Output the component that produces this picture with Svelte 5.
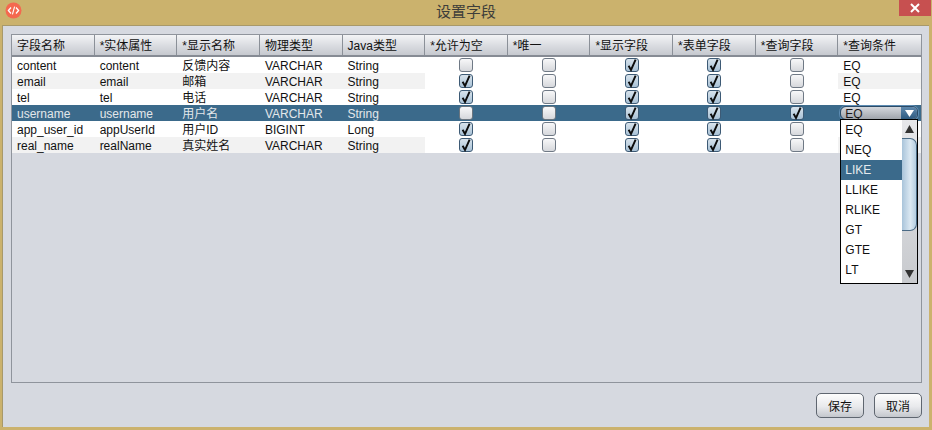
<script lang="ts">
	const headers = ['字段名称', '*实体属性', '*显示名称', '物理类型', 'Java类型', '*允许为空', '*唯一', '*显示字段', '*表单字段', '*查询字段', '*查询条件'];

	// rows under the open popup have no visible condition text
	const rows = [
		{ text: ['content', 'content', '反馈内容', 'VARCHAR', 'String'], checks: [false, false, true, true, false], cond: 'EQ' },
		{ text: ['email', 'email', '邮箱', 'VARCHAR', 'String'], checks: [true, false, true, true, false], cond: 'EQ' },
		{ text: ['tel', 'tel', '电话', 'VARCHAR', 'String'], checks: [true, false, true, true, false], cond: 'EQ' },
		{ text: ['username', 'username', '用户名', 'VARCHAR', 'String'], checks: [false, false, true, true, true], cond: 'EQ', selected: true },
		{ text: ['app_user_id', 'appUserId', '用户ID', 'BIGINT', 'Long'], checks: [true, false, true, true, false], cond: '' },
		{ text: ['real_name', 'realName', '真实姓名', 'VARCHAR', 'String'], checks: [true, false, true, true, false], cond: '' }
	];

	const options = ['EQ', 'NEQ', 'LIKE', 'LLIKE', 'RLIKE', 'GT', 'GTE', 'LT'];
</script>

<div class="window">
	<header class="titlebar">
		<svg class="logo" width="17" height="17" viewBox="0 0 17 17">
			<circle cx="8.5" cy="8.5" r="8" fill="#f4684f" />
			<path d="M6 5.5 3.400 8.500 6 11.500M11 5.500l2.600 3-2.600 3" fill="none" stroke="#fff" stroke-width="1.300" />
			<path d="M9.600 4.600 7.400 12.400" fill="none" stroke="#fff" stroke-width="1.100" />
		</svg>
		<span class="title">设置字段</span>
		<button class="close" aria-label="关闭">
			<svg width="10" height="10" viewBox="0 0 10 10">
				<path d="M1 1l8 8M9 1 1 9" stroke="#fff" stroke-width="2" />
			</svg>
		</button>
	</header>

	<main class="content">
		<section class="panel">
			<div class="grid head">
				{#each headers as h}
					<div class="th">{h}</div>
				{/each}
			</div>

			{#each rows as row, i}
				<div class="grid row" class:selected={row.selected} class:odd={i % 2 === 1}>
					{#each row.text as t}
						<div class="td text">{t}</div>
					{/each}
					{#each row.checks as c}
						<div class="td check">
							<span class="box" class:on={c}>
								{#if c}
									<svg width="12" height="13" viewBox="0 0 12 13">
										<path d="M2.600 6.800 5 11 9.600 .6" fill="none" stroke="#0c0c0c" stroke-width="1.900" />
									</svg>
								{/if}
							</span>
						</div>
					{/each}
					<div class="td text last">
						{#if row.selected}
							<div class="combo">
								<span class="value">{row.cond}</span>
								<span class="arrow">
									<svg width="9" height="7" viewBox="0 0 9 7"><path d="M0 0h9L4.500 7z" fill="#fff" /></svg>
								</span>
							</div>
							<div class="popup">
								<ul class="list">
									{#each options as o}
										<li class:active={o === 'LIKE'}>{o}</li>
									{/each}
								</ul>
								<div class="scrollbar">
									<svg class="up" width="9" height="8" viewBox="0 0 9 8"><path d="M4.500 0 9 8H0z" fill="#333" /></svg>
									<div class="thumb"></div>
									<svg class="down" width="9" height="8" viewBox="0 0 9 8"><path d="M0 0h9L4.500 8z" fill="#333" /></svg>
								</div>
							</div>
						{:else}
							{row.cond}
						{/if}
					</div>
				</div>
			{/each}
		</section>

		<footer class="actions">
			<button class="btn">保存</button>
			<button class="btn">取消</button>
		</footer>
	</main>
</div>

<style>
	:global(body) {
		margin: 0;
		background: #cbb26d;
	}

	.window {
		width: 932px;
		height: 430px;
		display: flex;
		flex-direction: column;
		overflow: hidden;
		background: #cbb26d;
		font-family: 'Liberation Sans', 'Noto Sans CJK SC', sans-serif;
		font-size: 12px;
		color: #111;
	}

	.titlebar {
		position: relative;
		height: 25px;
		flex: none;
		display: flex;
		align-items: center;
		justify-content: center;
	}

	.logo {
		position: absolute;
		left: 5px;
		top: 2px;
	}

	.title {
		font-size: 15px;
		color: #3d3d3a;
		margin-top: -4px;
	}

	.close {
		position: absolute;
		right: 1px;
		top: 0;
		width: 32px;
		height: 16px;
		padding: 0;
		border: 0;
		background: #c75050;
		display: flex;
		align-items: center;
		justify-content: center;
	}

	.content {
		flex: 1;
		margin: 0 3px 3px 2px;
		padding: 8px 7px 10px 8px;
		border-top: 1px solid #a8996a;
		border-left: 1px solid #a8996a;
		background: #d6d9e0;
		display: flex;
		flex-direction: column;
		box-sizing: border-box;
		min-height: 0;
	}

	.panel {
		height: 349px;
		flex: none;
		box-sizing: border-box;
		border: 1px solid #8f949c;
	}

	.grid {
		display: grid;
		grid-template-columns: repeat(11, 1fr);
	}

	.head {
		height: 22px;
		box-sizing: border-box;
		border-bottom: 2px solid #868b94;
		background: linear-gradient(#f3f4f6, #d9dbe0 55%, #c6c9cf);
	}

	.th {
		padding: 2px 0 0 5px;
		line-height: 18px;
		border-right: 1px solid #8b9098;
		white-space: nowrap;
		overflow: hidden;
	}

	.th:last-child {
		border-right: 0;
	}

	.row {
		height: 16px;
		background: #fff;
	}

	.td {
		height: 16px;
		line-height: 18px;
		position: relative;
	}

	.text {
		padding-left: 5px;
		white-space: nowrap;
	}

	.odd .text {
		background: #f2f2f2;
	}

	.selected,
	.selected .text {
		background: #3b6a8b;
		color: #e3e7ea;
	}

	.check {
		display: flex;
		align-items: center;
		justify-content: center;
	}

	.box {
		width: 14px;
		height: 14px;
		box-sizing: border-box;
		border: 1px solid #6f7985;
		border-radius: 3px;
		background: linear-gradient(#f8f8f9, #d6d8dc);
		display: flex;
		align-items: center;
		justify-content: center;
	}

	.box.on {
		border-color: #3d5a75;
		background: linear-gradient(#d8e3ec, #a9c2d6);
	}

	.selected .box:not(.on) {
		border-color: #6b7680;
	}

	.selected .last {
		padding: 0;
	}

	.combo {
		position: absolute;
		left: 2px;
		top: 1px;
		width: 78px;
		height: 14px;
		box-sizing: border-box;
		border: 1px solid #2b4a66;
		border-radius: 6px;
		background: linear-gradient(#d5d8dd, #9fa4ab);
		color: #1a1a1a;
		line-height: 14px;
		overflow: hidden;
		box-shadow: 0 0 0 1px #5d8cb3;
	}

	.value {
		padding-left: 4px;
	}

	.arrow {
		position: absolute;
		right: 0;
		top: 0;
		bottom: 0;
		width: 16px;
		background: linear-gradient(#5e88ad, #2e5a80);
		display: flex;
		align-items: center;
		justify-content: center;
	}

	.popup {
		position: absolute;
		left: 2px;
		top: 14px;
		width: 78px;
		height: 165px;
		box-sizing: border-box;
		border: 1px solid #000;
		background: #fff;
		display: flex;
		z-index: 2;
	}

	.list {
		flex: 1;
		margin: 0;
		padding: 0;
		list-style: none;
		color: #111;
	}

	.list li {
		height: 20px;
		line-height: 20px;
		padding-left: 4px;
	}

	.list li.active {
		background: #3b6a8b;
		color: #e6eaed;
	}

	.scrollbar {
		position: relative;
		width: 15px;
		background: linear-gradient(#e6e7ea, #c8cace);
	}

	.up,
	.down {
		position: absolute;
		left: 3px;
	}

	.up {
		top: 5px;
	}

	.down {
		bottom: 5px;
	}

	.thumb {
		position: absolute;
		left: 0;
		right: 0;
		top: 18px;
		height: 93px;
		box-sizing: border-box;
		border: 1px solid #4a6a85;
		border-left: 0;
		border-radius: 0 7px 7px 0;
		background: linear-gradient(90deg, #a9c4da, #dbe8f2 60%, #b4cde0);
	}

	.actions {
		flex: 1;
		display: flex;
		justify-content: flex-end;
		align-items: flex-start;
		gap: 10px;
		padding-top: 10px;
	}

	.btn {
		width: 48px;
		height: 25px;
		padding: 0;
		box-sizing: border-box;
		border: 1px solid #5f6670;
		border-radius: 5px;
		background: linear-gradient(#fdfdfd, #e8e9ec 55%, #c4c7cd);
		font: inherit;
		color: #111;
	}
</style>
